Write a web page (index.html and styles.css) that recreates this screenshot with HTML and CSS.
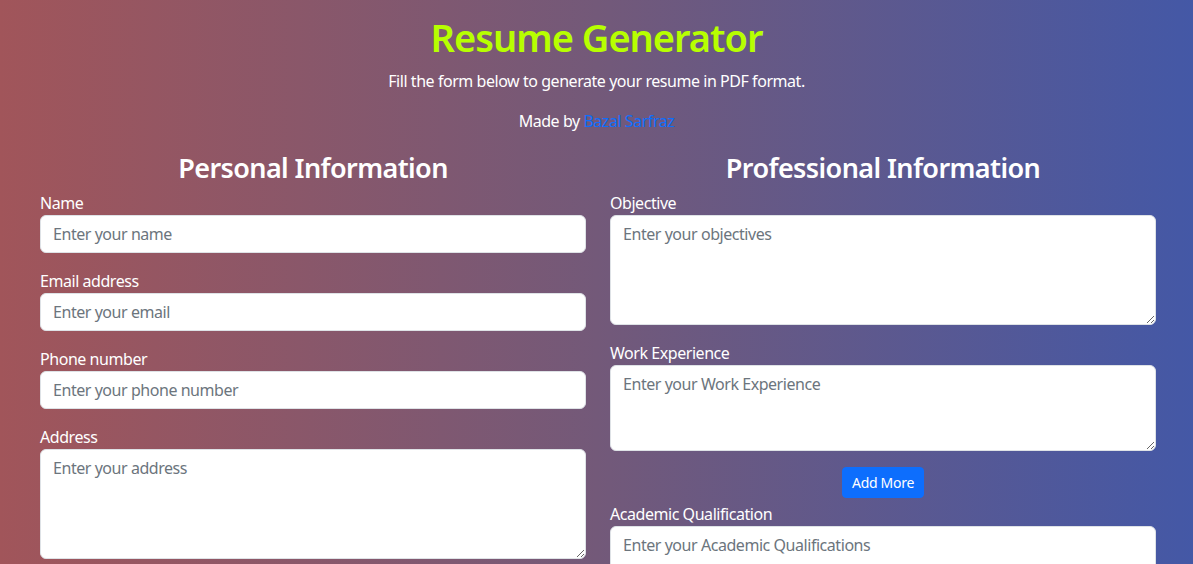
FILE: index.html
```html
<!DOCTYPE html>
<html lang="en">
<head>
<meta charset="utf-8">
<title>Resume Generator</title>
<link rel="stylesheet" href="styles.css">
</head>
<body>
<header class="hero">
  <h1 class="title">Resume Generator</h1>
  <p class="lead-text">Fill the form below to generate your resume in PDF format.</p>
  <p class="credit">Made by <a href="#" class="credit-link">Bazal Sarfraz</a></p>
</header>
<main class="form-grid">
  <section class="col">
    <h2 class="col-title">Personal Information</h2>
    <div class="field">
      <label class="label" for="name">Name</label>
      <input class="control" id="name" type="text" placeholder="Enter your name">
    </div>
    <div class="field">
      <label class="label" for="email">Email address</label>
      <input class="control" id="email" type="email" placeholder="Enter your email">
    </div>
    <div class="field">
      <label class="label" for="phone">Phone number</label>
      <input class="control" id="phone" type="text" placeholder="Enter your phone number">
    </div>
    <div class="field">
      <label class="label" for="address">Address</label>
      <textarea class="control area-4" id="address" rows="4" placeholder="Enter your address"></textarea>
    </div>
  </section>
  <section class="col">
    <h2 class="col-title">Professional Information</h2>
    <div class="field">
      <label class="label" for="objective">Objective</label>
      <textarea class="control area-4" id="objective" rows="4" placeholder="Enter your objectives"></textarea>
    </div>
    <div class="field">
      <label class="label" for="work">Work Experience</label>
      <textarea class="control area-3" id="work" rows="3" placeholder="Enter your Work Experience"></textarea>
    </div>
    <div class="btn-row">
      <button class="btn-add" type="button">Add More</button>
    </div>
    <div class="field">
      <label class="label" for="academic">Academic Qualification</label>
      <textarea class="control area-3" id="academic" rows="3" placeholder="Enter your Academic Qualifications"></textarea>
    </div>
  </section>
</main>
</body>
</html>
```
FILE: styles.css
```css
* { box-sizing: border-box; }
html, body { height: 100%; }
body {
  margin: 0;
  min-height: 100%;
  background: linear-gradient(to right, #a1555a 0%, #735979 50%, #4458a6 100%);
  background-attachment: fixed;
  font-family: "Noto Sans", "Open Sans", sans-serif;
  font-size: 16px;
  letter-spacing: -0.45px;
  line-height: 1.5;
  color: #fff;
}
.hero {
  text-align: center;
  padding-top: 13px;
}
.title {
  margin: 0 0 8px;
  font-size: 38px;
  line-height: 48px;
  font-weight: 600;
  letter-spacing: -1px;
  color: #b7ff00;
}
.lead-text, .credit {
  margin: 0 0 16px;
  line-height: 24px;
}
.credit-link { color: #0d6efd; text-decoration: none; }
.form-grid {
  display: grid;
  grid-template-columns: 546px 546px;
  column-gap: 24px;
  margin-left: 40px;
}
.col-title {
  margin: 0 0 4px;
  text-align: center;
  font-size: 27px;
  line-height: 38px;
  font-weight: 600;
  letter-spacing: -0.6px;
}
.field { display: flex; flex-direction: column; margin-bottom: 16px; }
.label { line-height: 24px; }
.control {
  display: block;
  width: 100%;
  height: 38px;
  padding: 6px 12px;
  font: inherit;
  letter-spacing: inherit;
  line-height: 24px;
  color: #212529;
  background: #fff;
  border: 1px solid #dee2e6;
  border-radius: 6px;
  outline: none;
}
.control::placeholder { color: #6c757d; opacity: 1; }
.area-4 { height: 110px; resize: vertical; }
.area-3 { height: 86px; resize: vertical; }
.btn-row { display: flex; justify-content: center; margin-bottom: 4px; margin-top: 0; }
.btn-add {
  font: inherit;
  font-size: 14px;
  line-height: 21px;
  letter-spacing: -0.3px;
  padding: 4px 9px;
  color: #fff;
  background: #0d6efd;
  border: 1px solid #0d6efd;
  border-radius: 4px;
}
```
